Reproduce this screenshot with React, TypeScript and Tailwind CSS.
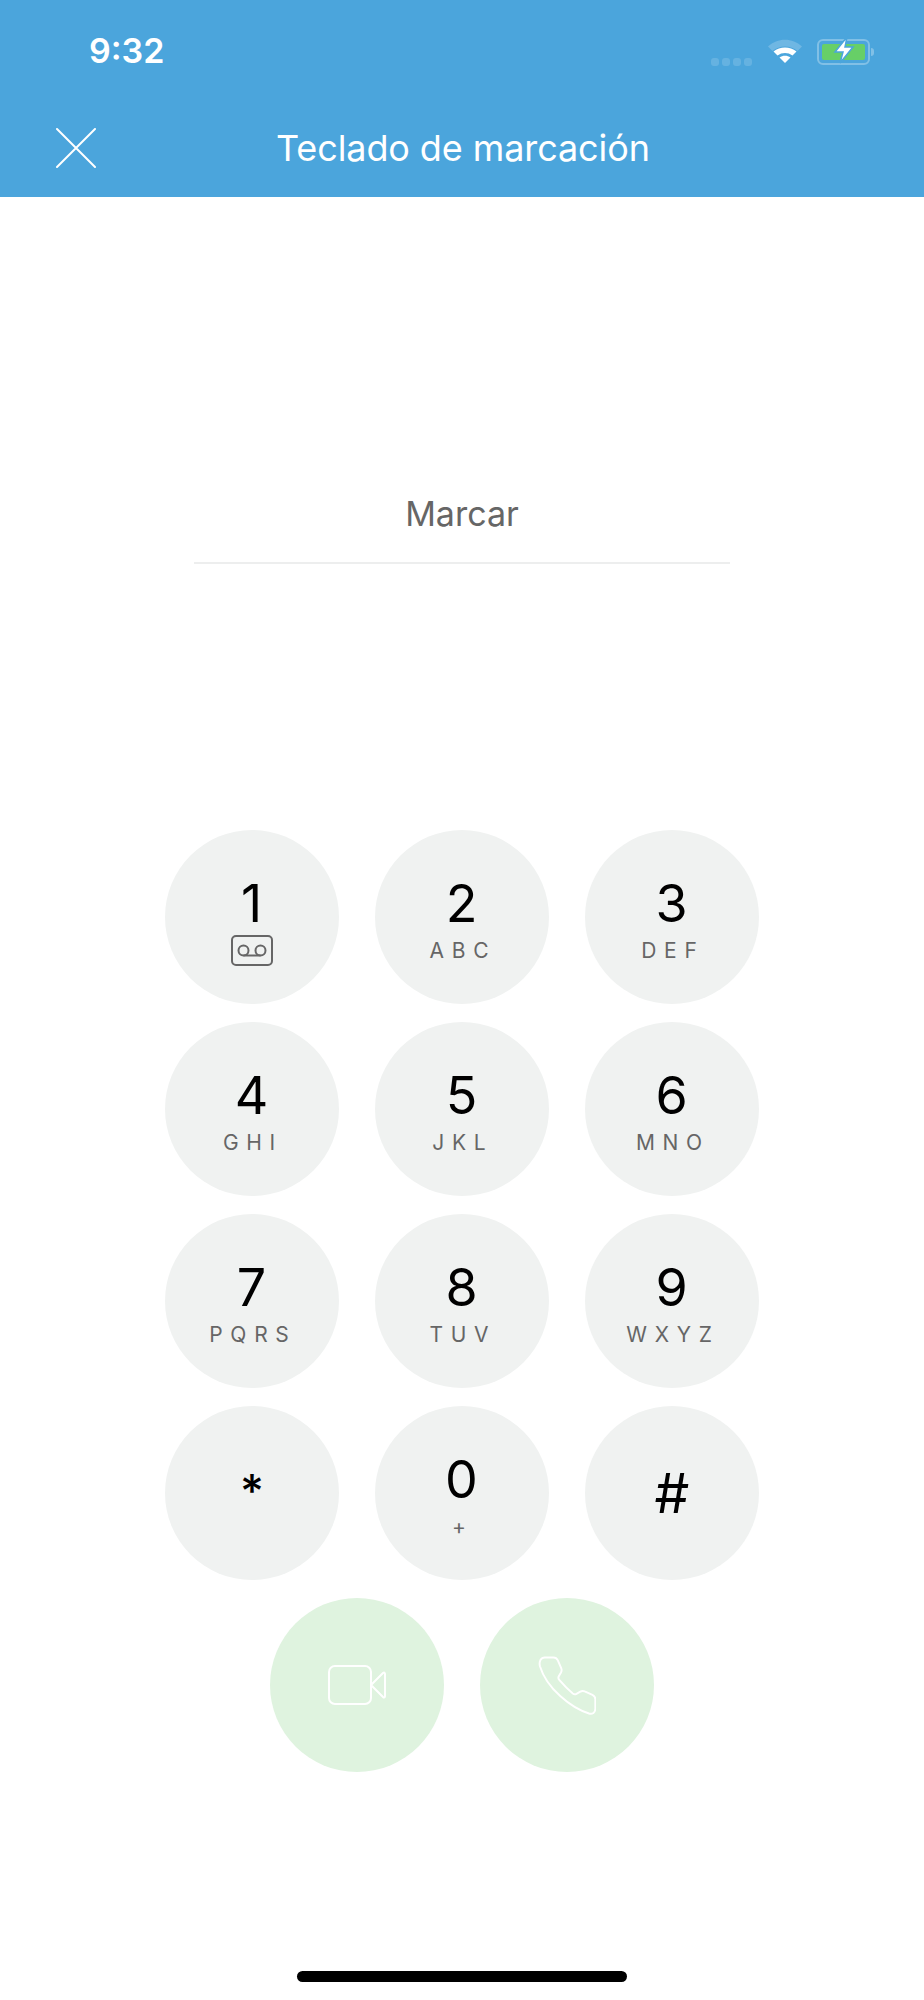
import React from "react";

const font = "font-['Inter','Liberation_Sans',sans-serif]";

const keys = [
  { digit: "1", sub: "voicemail" },
  { digit: "2", sub: "A B C" },
  { digit: "3", sub: "D E F" },
  { digit: "4", sub: "G H I" },
  { digit: "5", sub: "J K L" },
  { digit: "6", sub: "M N O" },
  { digit: "7", sub: "P Q R S" },
  { digit: "8", sub: "T U V" },
  { digit: "9", sub: "W X Y Z" },
  { digit: "*", sub: "" },
  { digit: "0", sub: "+" },
  { digit: "#", sub: "" },
];

const Voicemail = () => (
  <svg width="42" height="31" viewBox="0 0 42 31" fill="none" stroke="#666" strokeWidth="2">
    <rect x="1" y="1" width="40" height="29" rx="4" />
    <circle cx="12.500" cy="15.500" r="5" />
    <circle cx="29.500" cy="15.500" r="5" />
    <path d="M12.500 20.500h17" />
  </svg>
);

const SignalDots = () => (
  <div className="mt-[21px] flex gap-[3px]">
    {[0, 1, 2, 3].map((i) => (
      <div key={i} className="h-[8px] w-[8px] rounded-[3px] bg-white/15" />
    ))}
  </div>
);

const Wifi = () => (
  <svg width="36" height="26" viewBox="0 0 36 26" fill="none">
    <path d="M1 9.500C10.500 .5 25.500 .5 35 9.500l-4.500 4.500C23.500 8 12.500 8 5.500 14z" fill="#fff" fillOpacity="0.2" />
    <path d="M6.500 14.500C13 9 23 9 29.500 14.500l-4 4C21 15.200 15 15.200 10.500 18.500z" fill="#fff" />
    <path d="M12.500 20.500c3.300-2.200 7.700-2.200 11 0L18 26z" fill="#fff" />
  </svg>
);

const Battery = () => (
  <div className="relative ml-[14px] flex items-center">
    <div className="h-[26px] w-[53px] rounded-[6px] border-[2px] border-white/30 p-[3px]">
      <div className="h-full w-full rounded-[2px] bg-[#67CF67]" />
    </div>
    <div className="ml-[1px] h-[8px] w-[3px] rounded-r-full bg-white/30" />
    <svg className="absolute left-[15px] top-[-1px]" width="24" height="28" viewBox="0 0 24 28">
      <path d="M15 1 3 16h8L8 27 21 11h-8z" fill="#fff" stroke="#4BA5DC" strokeWidth="1.500" />
    </svg>
  </div>
);

const CloseIcon = () => (
  <svg width="40" height="40" viewBox="0 0 40 40" stroke="#fff" strokeWidth="2" strokeLinecap="round">
    <path d="M1 1l38 38M39 1 1 39" />
  </svg>
);

const VideoIcon = () => (
  <svg width="60" height="42" viewBox="0 0 60 42" fill="none" stroke="#fff" strokeWidth="2" strokeLinejoin="round">
    <rect x="2" y="2" width="42" height="38" rx="6" />
    <path d="M44 21 56 9c1-1 2-.5 2 1v22c0 1.500-1 2-2 1z" />
  </svg>
);

const PhoneIcon = () => (
  <svg width="58" height="59" viewBox="0 0 60 60" fill="none" stroke="#fff" strokeWidth="2" strokeLinejoin="round">
    <path d="M7 1h9c2 0 3.500 1 4.500 3l3.500 8c.7 1.700.6 3-.2 4.500l-2.300 4c-.7 1.300-.6 2.500.5 3.800 4 4.700 8.500 9.500 14 14 1.300 1 2.500 1 3.800.3l4-2.300c1.500-.8 3-.9 4.500-.2l8 3.500c2 1 3 2.500 3 4.500V54c0 4-3 6-6.500 5C34 53 9 33 2 10 .800 5 3 1 7 1z" />
  </svg>
);

const Key = ({ digit, sub }: { digit: string; sub: string }) => {
  if (digit === "#") {
    return (
      <button className="flex h-[174px] w-[174px] items-center justify-center rounded-full bg-[#F0F2F1] text-[55px] leading-none text-black">
        #
      </button>
    );
  }
  if (digit === "*") {
    return (
      <button className="flex h-[174px] w-[174px] justify-center rounded-full bg-[#F0F2F1] pt-[55px] text-[46px] font-medium leading-[60px] text-black">
        *
      </button>
    );
  }
  return (
    <button className="flex h-[174px] w-[174px] flex-col items-center rounded-full bg-[#F0F2F1] pt-[44px]">
      <span className="pr-[1px] text-[52px] leading-[60px] text-black">{digit}</span>
      {sub === "voicemail" ? (
        <span className="mt-[1px]">
          <Voicemail />
        </span>
      ) : (
        <span className="mt-[5px] pr-[5px] text-[21px] tracking-[0.9px] leading-[24px] text-[#666]">{sub}</span>
      )}
    </button>
  );
};

export default function App() {
  return (
    <div className={`${font} flex min-h-[2000px] w-[924px] flex-col bg-white`}>
      <header className="h-[197px] bg-[#4BA5DC] text-white">
        <div className="flex h-[90px] items-start justify-between pl-[89px] pr-[50px] pt-[30px]">
          <span className="text-[34px] font-semibold leading-[42px]">9:32</span>
          <div className="mt-[7px] flex">
            <SignalDots />
            <div className="ml-[15px]">
              <Wifi />
            </div>
            <Battery />
          </div>
        </div>
        <div className="flex items-center px-[56px] pt-[38px]">
          <CloseIcon />
          <h1 className="ml-[180px] text-[36px] font-normal leading-[40px] tracking-[-0.1px]">Teclado de marcación</h1>
        </div>
      </header>

      <div className="mx-auto mt-[295px] w-[536px] border-b-2 border-[#EDEEEE] pb-[26px] text-center text-[34px] leading-[44px] text-[#666]">
        Marcar
      </div>

      <div className="mx-auto mt-[266px] grid grid-cols-[174px_174px_174px] gap-x-[36px] gap-y-[18px]">
        {keys.map((k) => (
          <Key key={k.digit} digit={k.digit} sub={k.sub} />
        ))}
      </div>

      <div className="mt-[18px] flex justify-center gap-[36px]">
        <button className="flex h-[174px] w-[174px] items-center justify-center rounded-full bg-[#DFF3DF]">
          <VideoIcon />
        </button>
        <button className="flex h-[174px] w-[174px] items-center justify-center rounded-full bg-[#DFF3DF]">
          <PhoneIcon />
        </button>
      </div>

      <div className="mx-auto mt-[199px] h-[11px] w-[330px] rounded-full bg-black" />
    </div>
  );
}
